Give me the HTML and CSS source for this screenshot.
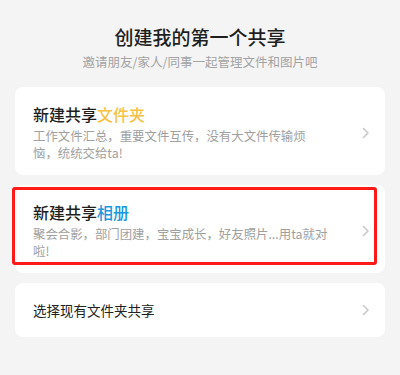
FILE: index.html
```html
<!DOCTYPE html>
<html lang="zh-CN">
<head>
    <meta charset="UTF-8">
    <meta name="viewport" content="width=device-width, initial-scale=1.0">
    <title>创建共享</title>
    <link rel="stylesheet" href="styles.css">
</head>
<body>

<div class="page">
    <!-- header -->
    <div class="header">
        <div class="title">创建我的第一个共享</div>
        <div class="subtitle">邀请朋友/家人/同事一起管理文件和图片吧</div>
    </div>

    <!-- new shared folder -->
    <div class="card">
        <div class="card-body">
            <div class="card-title">新建共享<span class="hl-yellow">文件夹</span></div>
            <div class="card-desc">工作文件汇总，重要文件互传，没有大文件传输烦<br>恼，统统交给ta!</div>
        </div>
        <svg class="arrow" width="8" height="12" viewBox="0 0 8 12"><path d="M1.5 1.5 L6 6 L1.5 10.5" fill="none" stroke="#c9c9c9" stroke-width="1.6" stroke-linecap="round" stroke-linejoin="round"/></svg>
    </div>

    <!-- new shared album -->
    <div class="card card-marked">
        <div class="card-body">
            <div class="card-title">新建共享<span class="hl-blue">相册</span></div>
            <div class="card-desc">聚会合影，部门团建，宝宝成长，好友照片...用ta就对<br>啦!</div>
        </div>
        <svg class="arrow" width="8" height="12" viewBox="0 0 8 12"><path d="M1.5 1.5 L6 6 L1.5 10.5" fill="none" stroke="#c9c9c9" stroke-width="1.6" stroke-linecap="round" stroke-linejoin="round"/></svg>
        <div class="mark"></div>
    </div>

    <!-- existing folder -->
    <div class="card card-small">
        <div class="card-body">
            <div class="card-label">选择现有文件夹共享</div>
        </div>
        <svg class="arrow" width="8" height="12" viewBox="0 0 8 12"><path d="M1.5 1.5 L6 6 L1.5 10.5" fill="none" stroke="#c9c9c9" stroke-width="1.6" stroke-linecap="round" stroke-linejoin="round"/></svg>
    </div>
</div>

</body>
</html>
```

FILE: styles.css
```css
body {
    margin: 0;
    font-family: "Noto Sans CJK SC", "Noto Sans", sans-serif;
    background-color: #f4f4f4;
    color: #222;
}
.page {
    padding: 24px 15px 0;
}
.header {
    text-align: center;
    margin-bottom: 15px;
}
.title {
    font-size: 19px;
    line-height: 26px;
    font-weight: 500;
    color: #1f1f1f;
}
.subtitle {
    margin-top: 2px;
    font-size: 12.5px;
    line-height: 20px;
    color: #a3a3a3;
}
.card {
    position: relative;
    display: flex;
    align-items: center;
    background-color: white;
    border-radius: 8px;
    padding: 16px 15px 13px 18px;
    margin-bottom: 10px;
}
.card-body {
    flex: 1;
}
.card-title {
    font-size: 16px;
    line-height: 22px;
    font-weight: 500;
    color: #1f1f1f;
}
.hl-yellow {
    color: #f6c243;
}
.hl-blue {
    color: #1b98e0;
}
.card-desc {
    margin-top: 3px;
    font-size: 12.4px;
    line-height: 17px;
    color: #a0a0a0;
}
.card-small {
    padding: 17px 15px 17px 18px;
}
.card-label {
    font-size: 13.5px;
    line-height: 20px;
    color: #222;
}
.arrow {
    flex-shrink: 0;
    display: block;
}
.mark {
    position: absolute;
    left: -3px;
    top: 2px;
    width: 359px;
    height: 72px;
    border: 3px solid #ff1a1a;
    border-radius: 3px;
    pointer-events: none;
}
```
